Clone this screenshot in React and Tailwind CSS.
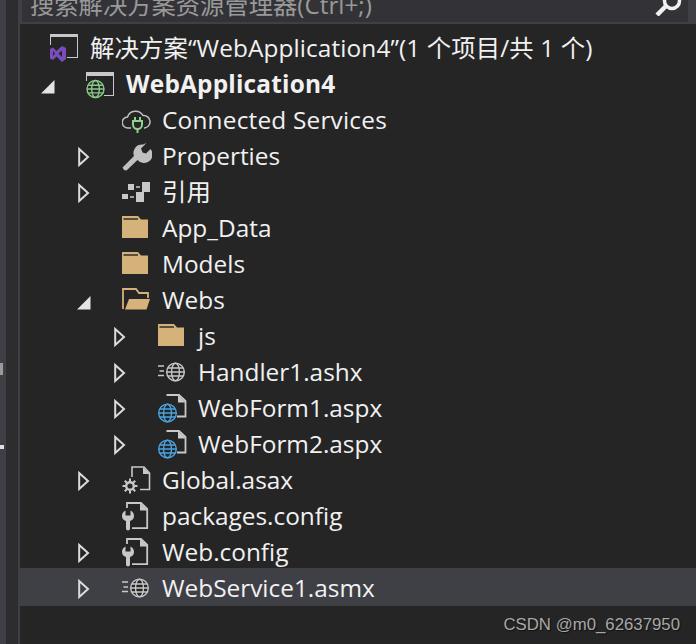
import React from "react";

const Frame = ({ children }) => (
  <svg width="30" height="30" viewBox="0 0 30 30" fill="none" className="block shrink-0">
    {children}
  </svg>
);

// globe used by the web items
const Globe = ({ cx, cy, r, color }) => (
  <g stroke={color} strokeWidth="1.4" fill="none">
    <circle cx={cx} cy={cy} r={r} fill="#252526" />
    <ellipse cx={cx} cy={cy} rx={r * 0.45} ry={r} />
    <path d={`M${cx - r} ${cy}H${cx + r}M${cx - r * 0.85} ${cy - r * 0.45}H${cx + r * 0.85}M${cx - r * 0.85} ${cy + r * 0.45}H${cx + r * 0.85}`} />
  </g>
);

const SolutionIcon = () => (
  <Frame>
    <path d="M0 0H28V3H1V11H0Z" fill="#c8c8c8" />
    <path d="M27 3H28V24H17V23H27Z" fill="#c8c8c8" />
    <path d="M0 15L3 13.5L6.5 17L12 12L16 14V25L12 28L6.5 22.5L3 26L0 24.5ZM3 17V22L5 19.5ZM12 16.5L8.5 19.5L12 23Z" fill="#7b4dbb" fillRule="evenodd" />
  </Frame>
);

const WebAppIcon = () => (
  <Frame>
    <path d="M0 2H28V6H1V11H0Z" fill="#c8c8c8" />
    <path d="M27 6H28V26H18V25H27Z" fill="#c8c8c8" />
    <Globe cx={9.5} cy={19} r={8.5} color="#89c98a" />
  </Frame>
);

const ConnectedIcon = () => (
  <Frame>
    <path d="M9 22H6A5.5 5.5 0 0 1 5.5 11A8.5 8.5 0 0 1 21 9.5A6.2 6.2 0 0 1 22.5 22H22" stroke="#c0c0c0" strokeWidth="1.5" />
    <path d="M13 11V15M18 11V15M15.5 22V27" stroke="#8fd08f" strokeWidth="2" />
    <path d="M11 15H20V18.5A4.5 4.5 0 0 1 11 18.5Z" stroke="#8fd08f" strokeWidth="2" />
  </Frame>
);

const WrenchIcon = () => (
  <Frame>
    <path d="M2 28L0.5 25.5L12 14A8.5 8.5 0 0 1 21 2.5L24.5 1L19 6.5L20.5 10.5L24 11.5L28.5 7A8.5 8.5 0 0 1 15.5 18L4.5 28.5Z" fill="#c0c0c0" />
  </Frame>
);

const ReferencesIcon = () => (
  <Frame>
    <path d="M6 6H12V12H6ZM20 4H28V14H20ZM0 16H6V21H0ZM14 14H22V24H14Z" fill="#c8c8c8" />
    <path d="M14 8H18V10H14ZM8 18H12V20H8Z" fill="#a0a0a0" />
  </Frame>
);

const FolderIcon = () => (
  <Frame>
    <path d="M0 2H16L19 5.5H26V24H0Z" fill="#d4b27a" />
    <path d="M1.5 5H16" stroke="#252526" strokeWidth="1.4" />
  </Frame>
);

const OpenFolderIcon = () => (
  <Frame>
    <path d="M1 23V3H14L17 7H26V12" stroke="#d4b27a" strokeWidth="1.8" />
    <path d="M3 23.5L7 13H28L24.5 23.5Z" fill="#d4b27a" />
  </Frame>
);

const ServiceIcon = () => (
  <Frame>
    <path d="M0 8H6M1.5 13H6M0 17.5H6" stroke="#c8c8c8" strokeWidth="1.4" />
    <Globe cx={17.5} cy={14} r={8.8} color="#c8c8c8" />
  </Frame>
);

const PageIcon = () => (
  <Frame>
    <path d="M8.5 1H21L27.5 7V22.5H19" stroke="#c8c8c8" strokeWidth="1.8" />
    <path d="M20 1L28 8.5H20Z" fill="#c8c8c8" />
    <Globe cx={9.5} cy={19} r={8.8} color="#4aa3df" />
  </Frame>
);

const GlobalIcon = () => (
  <Frame>
    <path d="M10 11V1H22L27.5 7V23.5H18" stroke="#c8c8c8" strokeWidth="1.6" />
    <path d="M21 1L28 8H21Z" fill="#c8c8c8" />
    <circle cx="8" cy="20" r="3.8" stroke="#c8c8c8" strokeWidth="2.4" />
    <path d="M8 12.5V15.5M8 24.5V27.5M0.5 20H3.5M12.5 20H15.5M2.8 14.8L4.8 16.8M11.2 23.2L13.2 25.2M13.2 14.8L11.2 16.8M4.8 23.2L2.8 25.2" stroke="#c8c8c8" strokeWidth="2" />
  </Frame>
);

const ConfigIcon = () => (
  <Frame>
    <path d="M5 6V1H19L25.2 7V26.2H10" stroke="#c8c8c8" strokeWidth="1.8" />
    <path d="M18 1L26 8.5H18Z" fill="#c8c8c8" />
    <path d="M3.5 8.5V13.5H8.5V8.5C10.8 9.5 12 11.5 12 14C12 16.5 10.5 18.5 8 19V26.5A2 2 0 0 1 4 26.5V19C1.5 18.5 0 16.5 0 14C0 11.5 1.2 9.5 3.5 8.5Z" fill="#c8c8c8" />
  </Frame>
);

const ArrowOpen = () => (
  <svg width="12" height="20" viewBox="0 0 12 20" fill="none" className="block">
    <path d="M1.2 2V18L10 10Z" stroke="#dcdcdc" strokeWidth="2" />
  </svg>
);

const ArrowDown = () => (
  <svg width="14" height="14" viewBox="0 0 14 14" className="block">
    <path d="M0 13.5H13.5V0Z" fill="#e4e4e4" />
  </svg>
);

const rows = [
  { indent: "pl-[30px]", arrow: "none", icon: <SolutionIcon />, label: "解决方案“WebApplication4”(1 个项目/共 1 个)", extra: "tracking-[0.1px]" },
  { indent: "pl-[20px]", arrow: "down", icon: <WebAppIcon />, label: "WebApplication4", extra: "font-bold tracking-[0.2px]" },
  { indent: "pl-[56px]", arrow: "blank", icon: <ConnectedIcon />, label: "Connected Services", extra: "tracking-[0.2px]" },
  { indent: "pl-[56px]", arrow: "open", icon: <WrenchIcon />, label: "Properties" },
  { indent: "pl-[56px]", arrow: "open", icon: <ReferencesIcon />, label: "引用" },
  { indent: "pl-[56px]", arrow: "blank", icon: <FolderIcon />, label: "App_Data" },
  { indent: "pl-[56px]", arrow: "blank", icon: <FolderIcon />, label: "Models" },
  { indent: "pl-[56px]", arrow: "down", icon: <OpenFolderIcon />, label: "Webs" },
  { indent: "pl-[92px]", arrow: "open", icon: <FolderIcon />, label: "js" },
  { indent: "pl-[92px]", arrow: "open", icon: <ServiceIcon />, label: "Handler1.ashx" },
  { indent: "pl-[92px]", arrow: "open", icon: <PageIcon />, label: "WebForm1.aspx" },
  { indent: "pl-[92px]", arrow: "open", icon: <PageIcon />, label: "WebForm2.aspx" },
  { indent: "pl-[56px]", arrow: "open", icon: <GlobalIcon />, label: "Global.asax" },
  { indent: "pl-[56px]", arrow: "blank", icon: <ConfigIcon />, label: "packages.config" },
  { indent: "pl-[56px]", arrow: "open", icon: <ConfigIcon />, label: "Web.config" },
  { indent: "pl-[58px]", arrow: "open", icon: <ServiceIcon />, label: "WebService1.asmx", selected: true },
];

const Row = ({ row }) => (
  <div
    className={`flex items-center ${row.indent} ${
      row.selected ? "-ml-[2px] -mt-[3px] h-[38px] bg-[#3f3f46] pt-[3px]" : "h-[36px]"
    }`}
  >
    {row.arrow !== "none" && (
      <div className="flex h-[20px] w-[46px] shrink-0 items-center">
        {row.arrow === "open" && <div className="ml-[2px]"><ArrowOpen /></div>}
        {row.arrow === "down" && <div className="ml-[1px] mt-[3px]"><ArrowDown /></div>}
      </div>
    )}
    <div className="w-[40px] shrink-0">{row.icon}</div>
    <span className={`-mt-[1px] whitespace-nowrap text-[24.4px] leading-none text-[#f1f1f1] ${row.extra || ""}`}>
      {row.label}
    </span>
  </div>
);

export default function App() {
  return (
    <div className="relative flex h-[644px] w-[696px] overflow-hidden bg-[#252526] font-['Open_Sans','Noto_Sans_CJK_SC',sans-serif]">
      {/* left edge of the window */}
      <div className="flex w-[6px] shrink-0 flex-col bg-[#3f3f46]">
        <div className="mt-[363px] h-[12px] w-[3px] bg-[#9a9a9a]" />
        <div className="mt-[70px] h-[4px] w-[4px] bg-[#e0e0e0]" />
      </div>
      <div className="w-[12px] shrink-0 bg-[#2d2d30]" />
      <div className="w-[2px] shrink-0 bg-[#3f3f46]" />

      <div className="flex min-w-0 flex-1 flex-col">
        {/* search box, cut by the top of the picture */}
        <div className="flex h-[24px] shrink-0 bg-[#3f3f46]">
          <div className="ml-[2px] flex h-[22px] flex-1 justify-between overflow-hidden bg-[#333337]">
            <span className="ml-[8px] whitespace-nowrap text-[24.3px] leading-[10px] text-[#999999]">
              搜索解决方案资源管理器(Ctrl+;)
            </span>
            <svg width="28" height="16" viewBox="0 0 28 16" className="mr-[5px] block">
              <path d="M2 15L11 6" stroke="#f1f1f1" strokeWidth="4.5" />
              <circle cx="17" cy="1" r="7.5" fill="none" stroke="#f1f1f1" strokeWidth="3.5" />
            </svg>
          </div>
          <div className="h-[22px] w-[8px] bg-[#3f3f46]" />
        </div>

        {/* solution tree */}
        <div className="flex flex-col pt-[7px]">
          {rows.map((row, index) => (
            <Row key={index} row={row} />
          ))}
        </div>
      </div>

      {/* watermark */}
      <div className="absolute bottom-[9px] right-[16px] font-['Liberation_Sans',sans-serif] text-[16.8px] leading-[20px] text-[#a8a8a8] [text-shadow:1px_1px_1px_#111]">
        CSDN @m0_62637950
      </div>
    </div>
  );
}
